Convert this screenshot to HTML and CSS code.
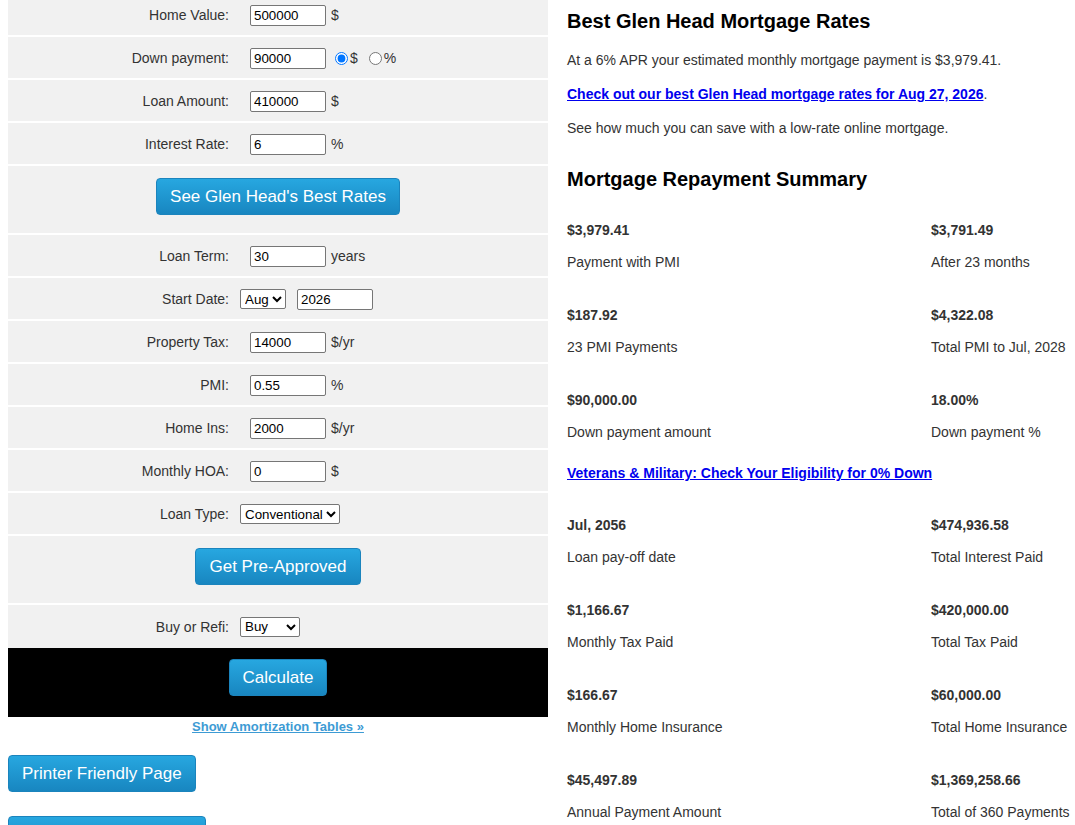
FILE: index.html
```html
<!DOCTYPE html>
<html>
<head>
<meta charset="utf-8">
<link rel="stylesheet" href="styles.css">
</head>
<body>
<div class="page">
  <div class="left">
    <div class="panel">
      <div class="row"><label class="lbl">Home Value:</label><div class="fld"><input class="num" value="500000"><span class="unit">$</span></div></div>
      <div class="row"><label class="lbl">Down payment:</label><div class="fld"><input class="num" value="90000"><input type="radio" name="dp" class="radio first" checked><span class="runit">$</span><input type="radio" name="dp" class="radio"><span class="runit">%</span></div></div>
      <div class="row"><label class="lbl">Loan Amount:</label><div class="fld"><input class="num" value="410000"><span class="unit">$</span></div></div>
      <div class="row"><label class="lbl">Interest Rate:</label><div class="fld"><input class="num" value="6"><span class="unit">%</span></div></div>
      <div class="btnrow"><button class="btn">See Glen Head's Best Rates</button></div>
      <div class="row"><label class="lbl">Loan Term:</label><div class="fld"><input class="num" value="30"><span class="unit">years</span></div></div>
      <div class="row"><label class="lbl">Start Date:</label><div class="fld"><select class="sel"><option>Aug</option></select><input class="num year" value="2026"></div></div>
      <div class="row"><label class="lbl">Property Tax:</label><div class="fld"><input class="num" value="14000"><span class="unit">$/yr</span></div></div>
      <div class="row"><label class="lbl">PMI:</label><div class="fld"><input class="num" value="0.55"><span class="unit">%</span></div></div>
      <div class="row"><label class="lbl">Home Ins:</label><div class="fld"><input class="num" value="2000"><span class="unit">$/yr</span></div></div>
      <div class="row"><label class="lbl">Monthly HOA:</label><div class="fld"><input class="num" value="0"><span class="unit">$</span></div></div>
      <div class="row"><label class="lbl">Loan Type:</label><div class="fld"><select class="sel"><option>Conventional</option></select></div></div>
      <div class="btnrow"><button class="btn">Get Pre-Approved</button></div>
      <div class="row last"><label class="lbl">Buy or Refi:</label><div class="fld"><select class="sel buy"><option>Buy</option></select></div></div>
      <div class="calcrow"><button class="btn">Calculate</button></div>
    </div>
    <div class="amort"><a href="#">Show Amortization Tables »</a></div>
    <div class="extra">
      <button class="btn">Printer Friendly Page</button>
      <button class="btn wide">Email This Calculation</button>
    </div>
  </div>
  <div class="right">
    <h1 class="title">Best Glen Head Mortgage Rates</h1>
    <p class="txt">At a 6% APR your estimated monthly mortgage payment is $3,979.41.</p>
    <p class="txt"><a class="blue" href="#">Check out our best Glen Head mortgage rates for Aug 27, 2026</a>.</p>
    <p class="txt">See how much you can save with a low-rate online mortgage.</p>
    <h2 class="title sub">Mortgage Repayment Summary</h2>
    <div class="grid">
      <div class="item"><div class="val">$3,979.41</div><div class="cap">Payment with PMI</div></div>
      <div class="item"><div class="val">$3,791.49</div><div class="cap">After 23 months</div></div>
      <div class="item"><div class="val">$187.92</div><div class="cap">23 PMI Payments</div></div>
      <div class="item"><div class="val">$4,322.08</div><div class="cap">Total PMI to Jul, 2028</div></div>
      <div class="item"><div class="val">$90,000.00</div><div class="cap">Down payment amount</div></div>
      <div class="item"><div class="val">18.00%</div><div class="cap">Down payment %</div></div>
    </div>
    <p class="txt vet"><a class="blue" href="#">Veterans &amp; Military: Check Your Eligibility for 0% Down</a></p>
    <div class="grid">
      <div class="item"><div class="val">Jul, 2056</div><div class="cap">Loan pay-off date</div></div>
      <div class="item"><div class="val">$474,936.58</div><div class="cap">Total Interest Paid</div></div>
      <div class="item"><div class="val">$1,166.67</div><div class="cap">Monthly Tax Paid</div></div>
      <div class="item"><div class="val">$420,000.00</div><div class="cap">Total Tax Paid</div></div>
      <div class="item"><div class="val">$166.67</div><div class="cap">Monthly Home Insurance</div></div>
      <div class="item"><div class="val">$60,000.00</div><div class="cap">Total Home Insurance</div></div>
      <div class="item"><div class="val">$45,497.89</div><div class="cap">Annual Payment Amount</div></div>
      <div class="item"><div class="val">$1,369,258.66</div><div class="cap">Total of 360 Payments</div></div>
    </div>
  </div>
</div>
</body>
</html>
```
FILE: styles.css
```css
html, body {
  margin: 0;
  padding: 0;
  background: #fff;
  overflow: hidden;
}
body {
  padding: 0 8px;
  font-family: "Liberation Sans", Arial, sans-serif;
  color: #333;
  font-size: 14px;
}
.page {
  display: flex;
  gap: 19px;
  align-items: flex-start;
}
.left {
  width: 540px;
  flex: none;
  margin-top: -6px;
}
.panel {
  background: #f1f1f1;
}
.row {
  display: grid;
  grid-template-columns: 232px 1fr;
  align-items: center;
  box-sizing: border-box;
  height: 43px;
  padding-top: 1px;
  border-bottom: 2px solid #fff;
}
.row.last {
  border-bottom: 0;
  padding-top: 0;
}
.lbl {
  text-align: right;
  padding-right: 11px;
  color: #333;
  font-size: 14px;
}
.fld {
  display: flex;
  align-items: center;
}
.num {
  box-sizing: border-box;
  width: 76px;
  height: 21px;
  margin: 0 0 0 10px;
  padding: 1px 3px;
  border: 1px solid #767676;
  border-radius: 2px;
  font-family: "Liberation Sans", Arial, sans-serif;
  font-size: 13.33px;
  color: #000;
  background: #fff;
}
.num.year {
  margin-left: 11px;
}
.unit {
  margin-left: 5px;
  color: #333;
  font-size: 14px;
}
.radio {
  width: 13px;
  height: 13px;
  margin: 0 2px 0 11px;
}
.radio.first {
  margin-left: 9px;
}
.runit {
  font-size: 14px;
  color: #333;
}
.sel {
  height: 20px;
  font-family: "Liberation Sans", Arial, sans-serif;
  font-size: 13.33px;
  color: #000;
  border: 1px solid #767676;
  border-radius: 2px;
  background: #fff;
  margin: 0;
}
.sel.buy {
  width: 60px;
}
.btnrow {
  height: 67px;
  border-bottom: 2px solid #fff;
  display: flex;
  justify-content: center;
  align-items: flex-start;
}
.btnrow .btn {
  margin-top: 12px;
}
.btn {
  box-sizing: border-box;
  height: 37px;
  padding: 0 13px;
  border: 1px solid #1b84bd;
  border-radius: 4px;
  background: linear-gradient(#27a7e0, #1886c0);
  color: #fff;
  font-family: "Liberation Sans", Arial, sans-serif;
  font-size: 17px;
  cursor: pointer;
}
.calcrow {
  background: #000;
  height: 69px;
  box-sizing: border-box;
  padding-top: 11px;
  display: flex;
  justify-content: center;
  align-items: flex-start;
}
.amort {
  text-align: center;
  font-size: 13px;
  font-weight: bold;
  line-height: 16px;
  padding-top: 2px;
}
.amort a {
  color: #3d9bd4;
}
.extra {
  display: flex;
  flex-direction: column;
  align-items: flex-start;
  gap: 24px;
  margin-top: 20px;
}
.btn.wide {
  width: 198px;
}
.right {
  flex: 1;
  min-width: 0;
}
.title {
  margin: 9px 0 0;
  font-size: 20px;
  line-height: 24px;
  font-weight: bold;
  color: #000;
}
.title.sub {
  margin-top: 29px;
}
.txt {
  margin: 17px 0 0;
  line-height: 20px;
  font-size: 14px;
  color: #333;
}
.txt + .txt {
  margin-top: 14px;
}
.blue {
  color: #0000ee;
  font-weight: bold;
}
.grid {
  display: grid;
  grid-template-columns: 364px 1fr;
  row-gap: 33px;
  margin-top: 29px;
}
.vet {
  margin: 21px 0 32px;
}
.vet + .grid {
  margin-top: 0;
}
.item {
  white-space: nowrap;
}
.val {
  font-weight: bold;
  line-height: 20px;
  color: #333;
}
.cap {
  margin-top: 12px;
  line-height: 20px;
  color: #333;
}
```
